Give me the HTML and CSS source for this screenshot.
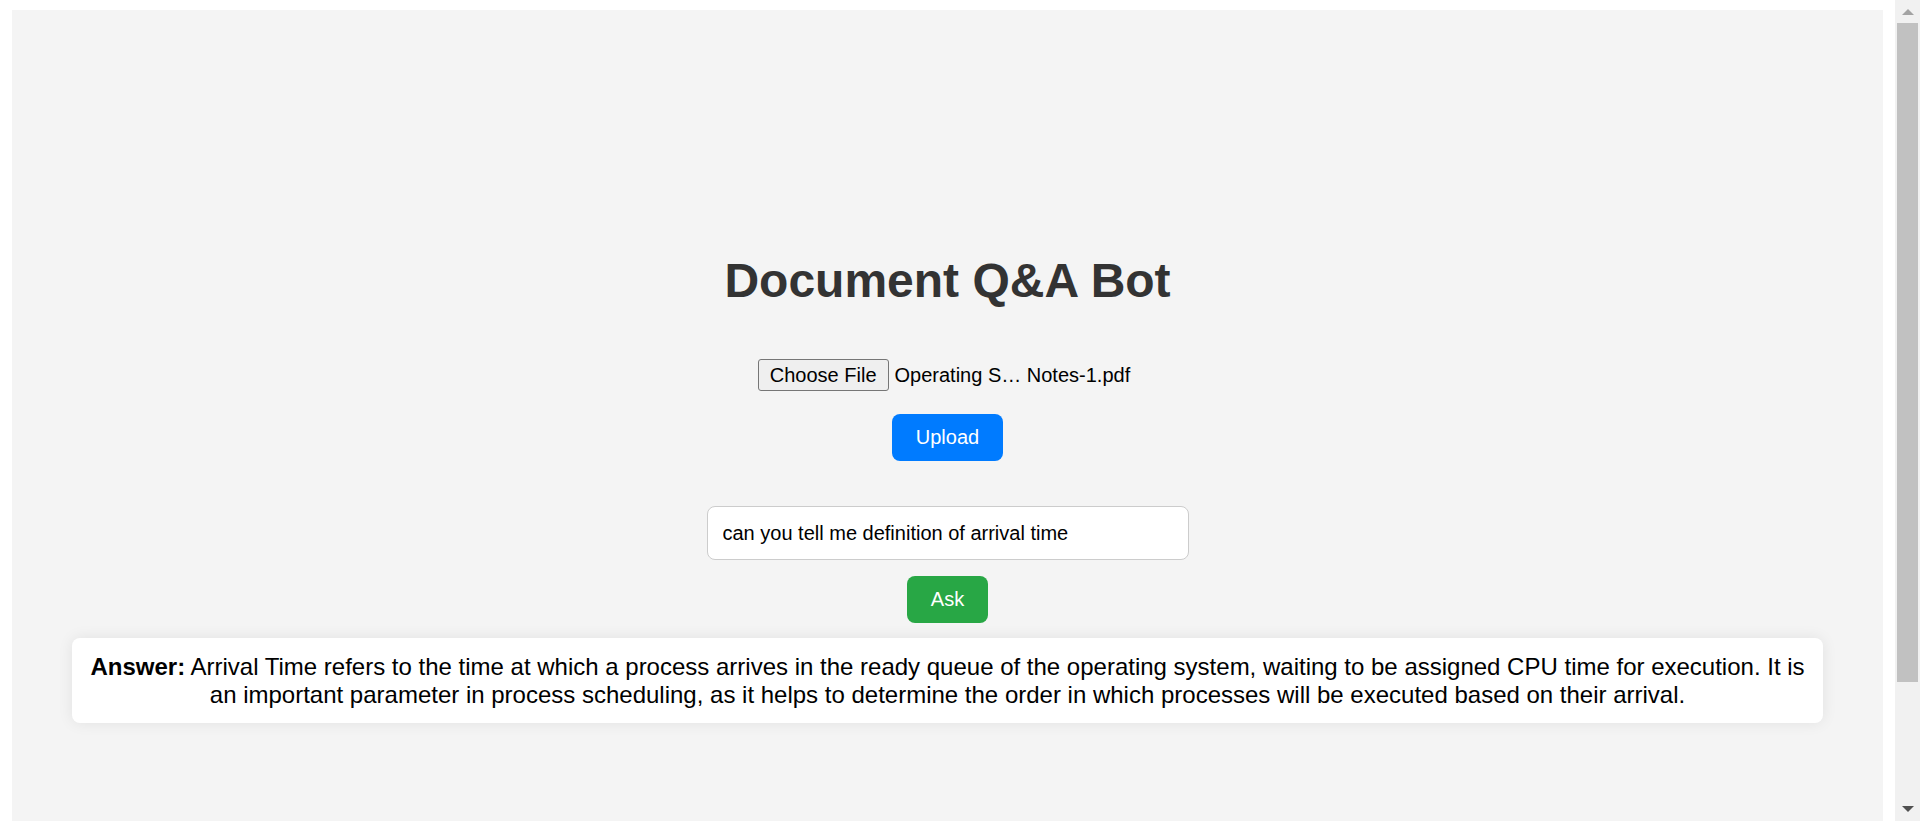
FILE: index.html
```html
<!DOCTYPE html>
<html lang="en">
<head>
<meta charset="utf-8">
<title>Document Q&amp;A Bot</title>
<link rel="stylesheet" href="styles.css">
</head>
<body class="page">
  <div class="viewport">
    <main class="app">
      <h1 class="title">Document Q&amp;A Bot</h1>
      <div class="file-row">
        <button class="file-btn" type="button">Choose File</button>
        <span class="file-name">Operating S… Notes-1.pdf</span>
      </div>
      <button class="btn btn-upload" type="button">Upload</button>
      <input class="question" type="text" value="can you tell me definition of arrival time">
      <button class="btn btn-ask" type="button">Ask</button>
      <div class="answer"><strong>Answer:</strong> Arrival Time refers to the time at which a process arrives in the ready queue of the operating system, waiting to be assigned CPU time for execution. It is an important parameter in process scheduling, as it helps to determine the order in which processes will be executed based on their arrival.</div>
    </main>
  </div>
  <div class="scrollbar">
    <div class="sb-btn"><span class="arrow-up"></span></div>
    <div class="sb-track"><div class="sb-thumb"></div></div>
    <div class="sb-btn sb-btn-down"><span class="arrow-down"></span></div>
  </div>
</body>
</html>
```
FILE: styles.css
```css
html, body {
  margin: 0;
  padding: 0;
  background: #ffffff;
}

.page {
  display: flex;
  height: 821px;
  overflow: hidden;
  font-family: "Liberation Sans", Arial, sans-serif;
}

.viewport {
  flex: 1;
  padding: 10px 12px 0;
  min-width: 0;
  display: flex;
  flex-direction: column;
}

.app {
  flex: 1;
  background: #f4f4f4;
  display: flex;
  flex-direction: column;
  align-items: center;
}

.title {
  margin: 243px 0 0;
  font-size: 48px;
  font-weight: bold;
  color: #333333;
  line-height: normal;
}

.file-row {
  margin-top: 51px;
  height: 32px;
  display: flex;
  align-items: center;
  padding-right: 7px;
}

.file-btn {
  height: 32px;
  padding: 0 11px;
  margin: 0 6px 0 0;
  font-family: "Liberation Sans", Arial, sans-serif;
  font-size: 20px;
  color: #000000;
  background: #efefef;
  border: 1px solid #767676;
  border-radius: 3px;
}

.file-name {
  font-size: 20px;
  color: #000000;
}

.btn {
  font-family: "Liberation Sans", Arial, sans-serif;
  font-size: 20px;
  line-height: 23px;
  color: #ffffff;
  border: none;
  border-radius: 8px;
  padding: 12px 24px;
}

.btn-upload {
  margin-top: 23px;
  background: #007bff;
}

.question {
  margin-top: 45px;
  box-sizing: border-box;
  width: 482px;
  height: 54px;
  padding: 0 15px;
  font-family: "Liberation Sans", Arial, sans-serif;
  font-size: 20px;
  color: #000000;
  background: #ffffff;
  border: 1px solid #cccccc;
  border-radius: 8px;
  outline: none;
}

.btn-ask {
  margin-top: 16px;
  background: #28a745;
}

.answer {
  align-self: stretch;
  margin: 15px 60px 0;
  padding: 15px;
  background: #ffffff;
  border-radius: 8px;
  box-shadow: 0 0 15px rgba(0, 0, 0, 0.08);
  font-size: 24px;
  line-height: 27.6px;
  color: #000000;
  text-align: center;
}

.answer strong {
  font-weight: bold;
}

.scrollbar {
  width: 25px;
  flex: none;
  background: #f1f1f1;
  display: flex;
  flex-direction: column;
}

.sb-btn {
  height: 23px;
  display: flex;
  align-items: center;
  justify-content: center;
  flex: none;
}

.sb-btn-down {
  height: 25px;
}

.arrow-up {
  width: 0;
  height: 0;
  border-left: 6px solid transparent;
  border-right: 6px solid transparent;
  border-bottom: 6px solid #a3a3a3;
}

.arrow-down {
  width: 0;
  height: 0;
  border-left: 6px solid transparent;
  border-right: 6px solid transparent;
  border-top: 6px solid #505050;
}

.sb-track {
  flex: 1;
  padding: 0 2px;
}

.sb-thumb {
  height: 659px;
  background: #c1c1c1;
}
```
